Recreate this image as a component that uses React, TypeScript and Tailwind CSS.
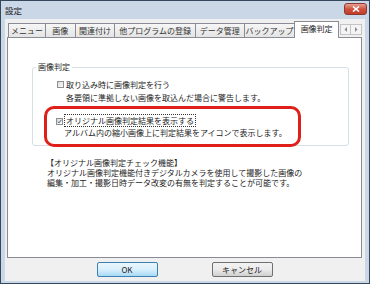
const tabs = [
  { label: "メニュー", w: "w-[38px]" },
  { label: "画像", w: "w-[31px]" },
  { label: "関連付け", w: "w-[41px]" },
  { label: "他プログラムの登録", w: "w-[82px]" },
  { label: "データ管理", w: "w-[50px]" },
  { label: "バックアップ", w: "w-[52px]" },
];

function CheckBox({ checked }: { checked?: boolean }) {
  return (
    <span className="mt-[3px] flex h-[7px] w-[7px] shrink-0 items-center justify-center border border-[#8e8f8f] bg-gradient-to-br from-[#dcdcdc] to-[#fbfbfb]">
      {checked && (
        <svg width="7" height="7" viewBox="0 0 7 7">
          <path d="M1 3.6 L2.8 5.4 L6 1.2" fill="none" stroke="#3c4f8c" strokeWidth="1.3" />
        </svg>
      )}
    </span>
  );
}

export default function App() {
  return (
    <div className="flex h-[284px] w-[370px] flex-col border border-[#34475c] bg-[#c9d7e6] font-['Noto_Sans_CJK_JP','Noto_Sans',sans-serif] text-[8px] text-[#1c1c1c]">
      {/* Title bar */}
      <div className="flex h-[18px] items-start justify-between pl-[4px] pr-[2px] pt-[2px]">
        <span className="text-[8.5px] leading-[14px]">設定</span>
        <div className="flex h-[12px] w-[23px] items-center justify-center rounded-[3px] border border-[#8a3a32] bg-gradient-to-b from-[#e8a093] via-[#d0513f] to-[#c23a2a]">
          <svg width="8" height="6" viewBox="0 0 8 6">
            <path d="M1 0.5 L7 5.5 M7 0.5 L1 5.5" stroke="white" strokeWidth="1.6" />
          </svg>
        </div>
      </div>

      {/* Body */}
      <div className="mx-[4px] mb-[2px] flex flex-1 flex-col bg-[#f0f0f0] pl-[2px] pr-[3px] pt-[2px]">
        {/* Tabs */}
        <div className="flex h-[16px] items-end pl-[1px]">
          {tabs.map((t, i) => (
            <div
              key={t.label}
              className={`${t.w} ${i > 0 ? "-ml-px" : ""} flex h-[14px] items-center justify-center border border-b-0 border-[#898c95] bg-gradient-to-b from-[#f6f6f6] to-[#e4e4e4] leading-none text-[#333]`}
            >
              {t.label}
            </div>
          ))}
          <div className="relative z-10 -mb-px -ml-px flex h-[17px] w-[45px] items-center justify-center border border-b-0 border-[#898c95] bg-white pb-[2px] leading-none">
            画像判定
          </div>
          <div className="mb-[2px] ml-[1px] flex">
            <div className="flex h-[11px] w-[11px] items-center justify-center border border-[#c4c4c4] bg-[#f4f4f4]">
              <svg width="4" height="5" viewBox="0 0 4 5">
                <path d="M3 0 L0.5 2.5 L3 5 Z" fill="#8a8a8a" />
              </svg>
            </div>
            <div className="flex h-[11px] w-[11px] items-center justify-center border border-l-0 border-[#c4c4c4] bg-[#f4f4f4]">
              <svg width="4" height="5" viewBox="0 0 4 5">
                <path d="M1 0 L3.5 2.5 L1 5 Z" fill="#8a8a8a" />
              </svg>
            </div>
          </div>
        </div>

        {/* Panel */}
        <div className="flex h-[221px] flex-col border border-[#898c95] bg-white">
          {/* Group box */}
          <div className="relative ml-[24px] mr-[12px] mt-[29px] h-[79px] rounded-[3px] border border-[#d5dfe5]">
            <span className="absolute left-[3px] top-[-6px] bg-white px-[2px] leading-[10px]">
              画像判定
            </span>

            <div className="ml-[24px] flex gap-[2px] pt-[10px] leading-[13px]">
              <CheckBox />
              <div>
                <div>取り込み時に画像判定を行う</div>
                <div>各要領に準拠しない画像を取込んだ場合に警告します。</div>
              </div>
            </div>

            <div className="ml-[23px] mt-[11px] flex gap-[3px] leading-[12px]">
              <CheckBox checked />
              <div>
                <div>
                  <span className="-ml-[2px] border border-dotted border-[#333] px-[1px]">
                    オリジナル画像判定結果を表示する
                  </span>
                </div>
                <div className="-ml-[2px]">アルバム内の縮小画像上に判定結果をアイコンで表示します。</div>
              </div>
            </div>

            {/* annotation */}
            <div className="absolute left-[11px] top-[38px] h-[41px] w-[257px] rounded-[10px] border-[3px] border-[#df1f1a]" />
          </div>

          {/* Notes */}
          <div className="ml-[39px] mt-[12px] leading-[10px]">
            <div className="-ml-[1px]">【オリジナル画像判定チェック機能】</div>
            <div>オリジナル画像判定機能付きデジタルカメラを使用して撮影した画像の</div>
            <div>編集・加工・撮影日時データ改変の有無を判定することが可能です。</div>
          </div>
        </div>

        {/* Buttons */}
        <div className="mt-[4px] flex justify-center gap-[54px]">
          <button className="h-[15px] w-[61px] rounded-[2px] border border-[#3c7fb1] bg-gradient-to-b from-[#eaf6fd] via-[#d9f0fc] to-[#a7d9f5] text-[8px] leading-none">
            OK
          </button>
          <button className="h-[15px] w-[61px] rounded-[2px] border border-[#707070] bg-gradient-to-b from-[#f2f2f2] via-[#ebebeb] to-[#cfcfcf] text-[8px] leading-none">
            キャンセル
          </button>
        </div>
      </div>
    </div>
  );
}
